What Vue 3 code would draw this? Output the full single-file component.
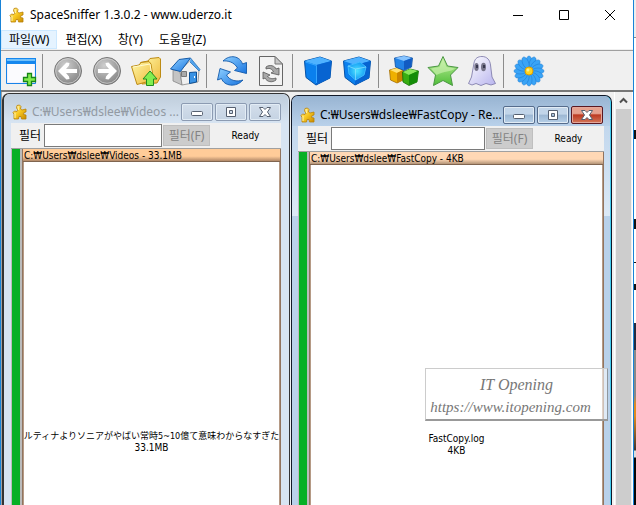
<script setup>
import { ref } from 'vue'

const menus = ['파일(W)', '편집(X)', '창(Y)', '도움말(Z)']
const tools = [
  ['new', 'New view'], null,
  ['back', 'Back'], ['forward', 'Forward'], ['up', 'Parent folder'], ['home', 'Home'], null,
  ['refresh', 'Rescan'], ['page', 'Rescan file'], null,
  ['cube', 'Less detail'], ['cubeIn', 'More detail'], null,
  ['blocks', 'File classes'], ['star', 'Tags'], ['ghost', 'Free space'], null,
  ['flower', 'About'],
]
const petals = Array.from({ length: 16 }, (_, i) => i * 22.5)
const views = ref([
  { id: 'videos', title: 'C:₩Users₩dslee₩Videos ...', root: 'C:₩Users₩dslee₩Videos - 33.1MB', file: 'ルティナよりソニアがやばい常時5~10億て意味わからなすぎた', size: '33.1MB', filter: '', active: false },
  { id: 'fastcopy', title: 'C:₩Users₩dslee₩FastCopy - Re...', root: 'C:₩Users₩dslee₩FastCopy - 4KB', file: 'FastCopy.log', size: '4KB', filter: '', active: true },
])
</script>

<template>
  <div class="screen">
    <svg class="defs" aria-hidden="true">
      <defs>
        <linearGradient id="gold" x1="0" y1="0" x2="1" y2="1"><stop offset="0" stop-color="#fff0a0" /><stop offset=".5" stop-color="#f8c820" /><stop offset="1" stop-color="#c88a00" /></linearGradient>
        <linearGradient id="blue" x1="0" y1="0" x2="1" y2="1"><stop offset="0" stop-color="#8fd0ff" /><stop offset="1" stop-color="#1874e0" /></linearGradient>
        <radialGradient id="grey" cx=".4" cy=".3" r=".8"><stop offset="0" stop-color="#cfcfcf" /><stop offset="1" stop-color="#7c7c7c" /></radialGradient>
        <linearGradient id="green" x1="0" y1="0" x2="0" y2="1"><stop offset="0" stop-color="#c4f0a0" /><stop offset="1" stop-color="#4fbe38" /></linearGradient>
        <linearGradient id="ghostly" x1="0" y1="0" x2="1" y2="1"><stop offset="0" stop-color="#ffffff" /><stop offset="1" stop-color="#b8b4ee" /></linearGradient>
        <linearGradient id="folder" x1="0" y1="0" x2="1" y2="1"><stop offset="0" stop-color="#fff8a8" /><stop offset="1" stop-color="#eeb838" /></linearGradient>
        <radialGradient id="glow"><stop offset="0" stop-color="#4fe4ff" /><stop offset="1" stop-color="#149bf5" /></radialGradient>
        <symbol id="puzzle" viewBox="0 0 16 16">
          <path d="M2 15V10.500L1 8.500L2.500 7L5 7.500L6 6L4.500 4L5 1.500L7.500 1L9 2.500L8.500 5L10 6L14 5V8L12 8.500L11.500 10.500L14 11V15H9.500L9 12.500H7L6.500 15Z" fill="url(#gold)" stroke="#b98208" stroke-width=".8" />
          <path d="M3 14V9M6 2L6.500 6" stroke="#fff4ad" fill="none" />
        </symbol>
      </defs>
    </svg>

    <main class="app">
      <header class="caption">
        <svg class="app-icon"><use href="#puzzle" /></svg>
        <h1>SpaceSniffer 1.3.0.2 - www.uderzo.it</h1>
        <div class="caption-buttons">
          <button aria-label="Minimize"><svg viewBox="0 0 12 12"><path d="M1 6.500H11" /></svg></button>
          <button aria-label="Maximize"><svg viewBox="0 0 12 12"><path d="M1.500 1.500H10.500V10.500H1.500Z" /></svg></button>
          <button aria-label="Close"><svg viewBox="0 0 12 12"><path d="M1 1L11 11M11 1L1 11" /></svg></button>
        </div>
      </header>

      <nav class="menu">
        <button v-for="(m, i) in menus" :key="m" :class="{ hot: i === 0 }">{{ m }}</button>
      </nav>

      <div class="toolbar">
        <template v-for="(t, i) in tools" :key="i">
          <span v-if="!t" class="sep"></span>
          <button v-else :aria-label="t[1]">
            <svg viewBox="0 0 32 32">
              <g v-if="t[0] === 'new'">
                <path d="M1.500 3.500H30.500V28.500H1.500Z" fill="#f1f0fc" stroke="#1883e8" />
                <path d="M3 9H29V22L14 27H3Z" fill="#fff" opacity=".7" />
                <path d="M1 3H31V9H1Z" fill="#1687ee" /><path d="M2 4H30V6H2Z" fill="#70c0fa" />
                <path d="M22.500 18.500H26.500V22.500H30.500V26.500H26.500V30.500H22.500V26.500H18.500V22.500H22.500Z" fill="#83ec4e" stroke="#168516" stroke-width="1.300" />
              </g>
              <g v-else-if="t[0] === 'back' || t[0] === 'forward'">
                <circle cx="16" cy="16" r="13.500" fill="url(#grey)" stroke="#777" />
                <circle cx="16" cy="16" r="12.300" fill="none" stroke="#d8d8d8" stroke-width=".7" />
                <path v-if="t[0] === 'back'" d="M6 16L14.500 7.500L17.500 8L17 10.500L14 14H25V18H14L17 21.500L17.500 24L14.500 24.500Z" fill="#fff" />
                <path v-else d="M26 16L17.500 7.500L14.500 8L15 10.500L18 14H7V18H18L15 21.500L14.500 24L17.500 24.500Z" fill="#fff" />
              </g>
              <g v-else-if="t[0] === 'up'">
                <path d="M10.500 7.500L18 6L20 3.500L29 2.500L30.500 4V22L27 28L12 29Z" fill="url(#folder)" stroke="#bd8b14" />
                <path d="M1.500 11.500L9 10L11 7.500L19 6.500L21 9L23.500 25L7 29.500Z" fill="url(#folder)" stroke="#bd8b14" />
                <path d="M3 12L20 9L22 22" fill="none" stroke="#fffbcf" />
                <path d="M20 16L27 24H23.500V30.500H16.500V24H13Z" fill="#82ee50" stroke="#208c20" stroke-linejoin="round" />
              </g>
              <g v-else-if="t[0] === 'home'" stroke-linejoin="round">
                <path d="M4 14.500L11 16L13 30L4 26Z" fill="#c4c4c4" stroke="#888" stroke-width=".8" />
                <path d="M11 16L21 5.500L30 15L29 27L13 30Z" fill="#f0f0f0" stroke="#888" stroke-width=".8" />
                <path d="M1.500 14L10 4.500L21.500 3L11.500 16.500Z" fill="url(#blue)" stroke="#155ba8" />
                <path d="M21.500 3L31 14.500L30 16L21 7" fill="#51a4ed" stroke="#2b74bb" stroke-width=".8" />
                <path d="M20.500 17.500L27.500 17V27L20.500 28.500Z" fill="#3a93e4" stroke="#0e5196" /><path d="M25.500 21V23" stroke="#fff" />
                <path d="M12.500 16.500H17.500V21.500H12.500Z" fill="#aaa" stroke="#777" />
              </g>
              <g v-else-if="t[0] === 'refresh'" fill="url(#blue)" stroke="#1259aa" stroke-width=".9" stroke-linejoin="round">
                <path d="M7 6C14 -1 24 1 26.500 9L30.500 7.500V18.500L18.500 15.500L21.500 13C18 7 12 5.500 7 6Z" />
                <path d="M27 25C20 33 8 31 5.500 23.500L1.500 25L4 13.500L14.500 17L10.500 20C14 26 21 27 27 25Z" />
              </g>
              <g v-else-if="t[0] === 'page'">
                <path d="M4.500 1.500H20L27.500 9V30.500H4.500Z" fill="#f3f3f3" stroke="#666" />
                <path d="M20 1.500V9H27.500Z" fill="#c8c8c8" stroke="#777" />
                <g fill="#a8a8a8" stroke="#555" stroke-width=".8"><path d="M11 12C15 9 20 11 21 14L24 13V20L16 18L18.500 16.500C16 13 14 13 11 14Z" /><path d="M21 25C17 28 12 27 10 23L8 24V17L15 20L12.500 21.500C15 24 18 24 21 23Z" /></g>
              </g>
              <g v-else-if="t[0] === 'cube' || t[0] === 'cubeIn'" stroke-linejoin="round">
                <path d="M2.500 6L18 2L29.500 6L28 23L14 30L4 22.500Z" fill="#0a80ee" stroke="#0752a6" />
                <path d="M2.500 6L18 2L29.500 6L14.500 10Z" fill="#4fb2ff" />
                <path d="M14.500 10L29.500 6L28 23L14 30Z" fill="#0764d1" />
                <path v-if="t[0] === 'cubeIn'" d="M7 11L19 7L25 12L23 20L14.500 25L8 19Z" fill="url(#glow)" stroke="#3fbcff" />
                <path v-if="t[0] === 'cubeIn'" d="M7 11L14.500 14L25 12M14.500 14V25" fill="none" stroke="#8fe4ff" stroke-width=".7" />
                <path v-else d="M3.500 7L14.500 10.500V28" fill="none" stroke="#35a5ff" />
              </g>
              <g v-else-if="t[0] === 'blocks'" stroke-linejoin="round" stroke-width=".8">
                <path d="M1.500 15L9 13L16 15L15 25L9 28L2.500 25Z" fill="#eeb000" stroke="#a16b00" /><path d="M2 15L9 13L15 15L9 18Z" fill="#ffe171" /><path d="M9 18L15 15V25L9 28Z" fill="#c98500" />
                <path d="M14.500 17L22 14L30.500 16L29 27L21 30.500L15 27Z" fill="#39ad12" stroke="#126d06" /><path d="M15 17L22 14L30 16L21 20Z" fill="#8ae65d" /><path d="M21 20L30 16L29 27L21 30Z" fill="#138c07" />
                <path d="M6.500 3L16 1L24.500 3L23.500 12L16 15.500L7.500 12Z" fill="#2383e6" stroke="#124e9c" /><path d="M7 3L16 1L24 3L16 6Z" fill="#87c4ff" /><path d="M16 6L24 3L23 12L16 15Z" fill="#125bc2" />
              </g>
              <g v-else-if="t[0] === 'star'" stroke-linejoin="round">
                <path d="M16 1.500L20.500 11L31 12.500L23.500 20L25.500 30.500L16 25.500L6.500 30.500L8.500 20L1 12.500L11.500 11Z" fill="url(#green)" stroke="#4b9744" />
                <path d="M16 4L19.500 12L28 13.500C24 17 17 16 9.500 20L4 13.500L12.500 12Z" fill="#d0f3b6" opacity=".6" />
              </g>
              <g v-else-if="t[0] === 'ghost'">
                <path d="M8 8C9 3 12 1.500 16 1.500C21 1.500 24 5 24.500 10L26 22L29.500 28.500L25 30L20 28.500L15 30.500L10 28.500L6 30L2.500 28.500L5.500 22Z" fill="url(#ghostly)" stroke="#7774a5" stroke-width=".8" />
                <ellipse cx="10.500" cy="12" rx="2.200" ry="4" fill="#77758a" /><ellipse cx="17.500" cy="12" rx="2.500" ry="4.200" fill="#77758a" />
                <path d="M11 10V13M18 10V13" stroke="#25253c" stroke-width="1.500" />
              </g>
              <g v-else>
                <circle cx="16" cy="16" r="12" fill="#2a8fe8" />
                <ellipse v-for="a in petals" :key="a" cx="16" cy="7" rx="3" ry="6" fill="#3aa4f6" stroke="#1b7ad2" stroke-width=".5" :transform="`rotate(${a} 16 16)`" />
                <circle cx="16" cy="16" r="4" fill="#ffd421" stroke="#e09f00" /><circle cx="15" cy="15" r="1.500" fill="#fff28a" />
              </g>
            </svg>
          </button>
        </template>
      </div>

      <div class="workspace">
        <div class="desktop">
          <section v-for="v in views" :key="v.id" class="child" :class="[v.id, { active: v.active }]">
            <header>
              <svg class="child-icon"><use href="#puzzle" /></svg>
              <h2>{{ v.title }}</h2>
              <div class="child-buttons">
                <button aria-label="Minimize"><svg viewBox="0 0 14 12"><rect x="1.500" y="5.500" width="11" height="4" rx="1" /></svg></button>
                <button aria-label="Restore"><svg viewBox="0 0 14 12"><path fill-rule="evenodd" d="M2.500 1.500H11.500V10.500H2.500ZM5.500 4.500V7.500H8.500V4.500Z" /></svg></button>
                <button class="close" aria-label="Close"><svg viewBox="0 0 14 12"><path d="M1.500 1.500H5L7 3.500L9 1.500H12.500L9.500 6L12.500 10.500H9L7 8.500L5 10.500H1.500L4.500 6Z" /></svg></button>
              </div>
            </header>
            <div class="client">
              <form class="filter" @submit.prevent>
                <label :for="v.id">필터</label>
                <input :id="v.id" v-model="v.filter" type="text">
                <button disabled>필터(F)</button>
                <output>Ready</output>
              </form>
              <div class="map">
                <div class="meter"></div>
                <div class="root">
                  <h3>{{ v.root }}</h3>
                  <div class="file"><span>{{ v.file }}</span><span>{{ v.size }}</span></div>
                </div>
              </div>
            </div>
          </section>
          <aside class="watermark"><span>IT Opening</span><span>https://www.itopening.com</span></aside>
        </div>
        <div class="scrollbar">
          <button aria-label="Scroll up"><svg viewBox="0 0 9 7"><path d="M1 5.500L4.500 2L8 5.500" /></svg></button>
        </div>
      </div>
    </main>
    <div class="behind"></div>
  </div>
</template>

<style>
body { margin: 0; overflow: hidden; }
</style>

<style scoped>
* { box-sizing: border-box; }
.screen { display: flex; height: 100vh; overflow: hidden; background: #fff; color: #000; font: 12px/16px "Noto Sans", "Noto Sans CJK KR", sans-serif; }
.defs { position: absolute; width: 0; height: 0; }
h1, h2, h3 { margin: 0; font-weight: 400; white-space: pre; }
button { padding: 0; border: 0; background: none; color: inherit; font: inherit; }
svg { display: block; fill: none; }
.app { flex: 1; min-width: 0; display: flex; flex-direction: column; border: solid #1883d7; border-width: 0 1px; }
.caption { display: flex; align-items: center; height: 29px; padding-left: 8px; }
.app-icon, .child-icon { width: 16px; height: 16px; flex: none; }
.caption h1 { flex: 1; margin-left: 5px; font-size: 12px; }
.caption-buttons { display: flex; }
.caption-buttons button { display: grid; place-items: center; width: 46px; height: 29px; }
.caption-buttons svg { width: 12px; height: 12px; stroke: #000; }
.menu { display: flex; height: 21px; border-bottom: 1px solid #f0f0f0; }
.menu button { padding: 0 7px; height: 19px; margin-top: 1px; border: 1px solid transparent; line-height: 17px; }
.menu .hot { background: #e5f3ff; border-color: #cce8ff; }
.toolbar { display: flex; align-items: center; height: 42px; background: #f0f0f0; border-top: 1px solid #a0a0a0; border-bottom: 2px solid #777; }
.toolbar button { display: grid; place-items: center; width: 39px; height: 38px; }
.toolbar button svg { width: 32px; height: 32px; }
.sep { width: 8px; height: 34px; border-left: 1px solid #8c8c8c; margin-left: 2px; margin-right: -2px; }
.workspace { flex: 1; min-height: 0; display: flex; background: #f0f0f0; border-left: 1px solid #a0a0a0; }
.desktop { position: relative; flex: 1; min-width: 0; display: grid; grid-template: minmax(0, 1fr) / minmax(0, 288fr) minmax(0, 321fr); gap: 1px; padding-right: 2px; overflow: hidden; }
.child { min-width: 0; display: flex; flex-direction: column; padding: 0 8px 0 7px; background: #d7e4f2; border: solid #333; border-width: 1px 1px 0 2px; border-radius: 7px 7px 0 0; }
.videos { margin-top: 1px; }
.fastcopy { margin-top: 3px; background: linear-gradient(#b9d1ea, #dce9f6 120px, #b9d1ea 120px); border-color: #101828; border-left-width: 1px; box-shadow: inset -1px 0 #42cdf0; padding: 0 7px 0 6px; }
.child header { display: flex; align-items: center; height: 29px; margin: 0 -7px; padding: 6px 7px 0 8px; background: linear-gradient(#bfcddb, #d7e4f2); border-radius: 6px 6px 0 0; }
.fastcopy header { height: 30px; margin: 0 -6px; padding: 7px 7px 0 8px; background: linear-gradient(#98b4d2, #b9d1ea); }
.child h2 { flex: 1; min-width: 0; overflow: hidden; margin-left: 4px; font-size: 12px; color: #929aa3; }
.active h2 { color: #000; }
.child-buttons { display: flex; gap: 2px; }
.child-buttons button { display: grid; place-items: center; width: 32px; height: 18px; border: 1px solid #8c9bb2; border-radius: 2px; background: linear-gradient(#d3deeb, #c5d3e3); box-shadow: inset 0 0 0 1px #e2ecf5; }
.active .child-buttons button { border-color: #566c8c; background: linear-gradient(#c2d5e9 45%, #9cb7d3 50%, #b7d0e8); }
.active .child-buttons .close { border-color: #5a1822; background: linear-gradient(#e6a18f 40%, #bd3a23 50%, #d37759); box-shadow: inset 0 0 0 1px #e4a79b; }
.child-buttons svg { width: 14px; height: 12px; fill: #fff; stroke: #566070; }
.client { flex: 1; min-height: 0; display: flex; flex-direction: column; }
.filter { display: flex; align-items: center; height: 26px; background: #f0f0f0; border-bottom: 1px solid #a0a0a0; }
.filter label { padding: 0 2px 0 8px; width: 33px; white-space: nowrap; }
.filter input { flex: 1; min-width: 0; height: 23px; border: 1px solid #7a7a7a; padding: 0 3px; background: #fff; font: inherit; }
.filter button { width: 47px; height: 21px; margin-left: 1px; background: #ccc; border: 1px solid #bfbfbf; color: #838383; }
.filter output { width: 71px; text-align: center; font: 10px/16px "DejaVu Sans Condensed", "DejaVu Sans", sans-serif; }
.map { flex: 1; min-height: 0; display: flex; gap: 2px; padding-left: 1px; background: #bbb; }
.meter { width: 8px; background: #06b025; }
.root { flex: 1; min-width: 0; display: flex; flex-direction: column; border: solid #91745f; border-width: 0 1px; }
.root h3 { height: 13px; padding-left: 1px; overflow: hidden; background: linear-gradient(#ffcc99 60%, #b08868); border-bottom: 1px solid #806550; font: 10px/13px "DejaVu Sans Condensed", "DejaVu Sans", sans-serif; }
.active .root h3 { background: linear-gradient(#ffd8b5 60%, #b39478); }
.file { flex: 1; display: flex; flex-direction: column; align-items: center; padding-top: 268px; overflow: hidden; background: #fff; border: solid #b59a85; border-width: 0 1px; font: 9px/12px "DejaVu Sans Condensed", "Noto Sans CJK JP", sans-serif; white-space: nowrap; }
.active .file, .file span:last-child { font-size: 10px; }
.watermark { position: absolute; right: 6px; top: 276px; width: 183px; height: 53px; padding: 4px 15px 0 3px; display: flex; flex-direction: column; align-items: center; background: rgba(255, 255, 255, .55); border: solid #ccc; border-width: 1px 1px 2px 1px; border-right-color: #8f969d; border-bottom-color: #999; color: #777; font: italic 15px/23px "Liberation Serif", serif; }
.watermark span:first-child { padding-left: 12px; font-size: 16px; }
.scrollbar { flex: none; width: 19px; padding: 0 1px; border: solid #fff; border-width: 0 1px; background: linear-gradient(90deg, #f0f0f0 1px, #cdcdcd 1px, #cdcdcd 16px, #f0f0f0 16px); }
.scrollbar button { display: grid; place-items: center; width: 100%; height: 17px; background: #f0f0f0; }
.scrollbar svg { width: 9px; height: 7px; stroke: #505050; stroke-width: 2; }
.behind { width: 2px; background: linear-gradient(#eee 0 37px, #888 37px 38px, #fff 38px 130px, #111 130px 139px, #fff 139px 219px, #111 219px 229px, #fff 229px 262px, #111 262px 263px, #fff 263px 284px, #111 284px 290px, #fff 290px 323px, #222b40 323px 350px, #888 350px 395px, #df8b20 405px 416px, #40342e 450px, #ddd 451px 457px, #050505 458px); }
</style>
